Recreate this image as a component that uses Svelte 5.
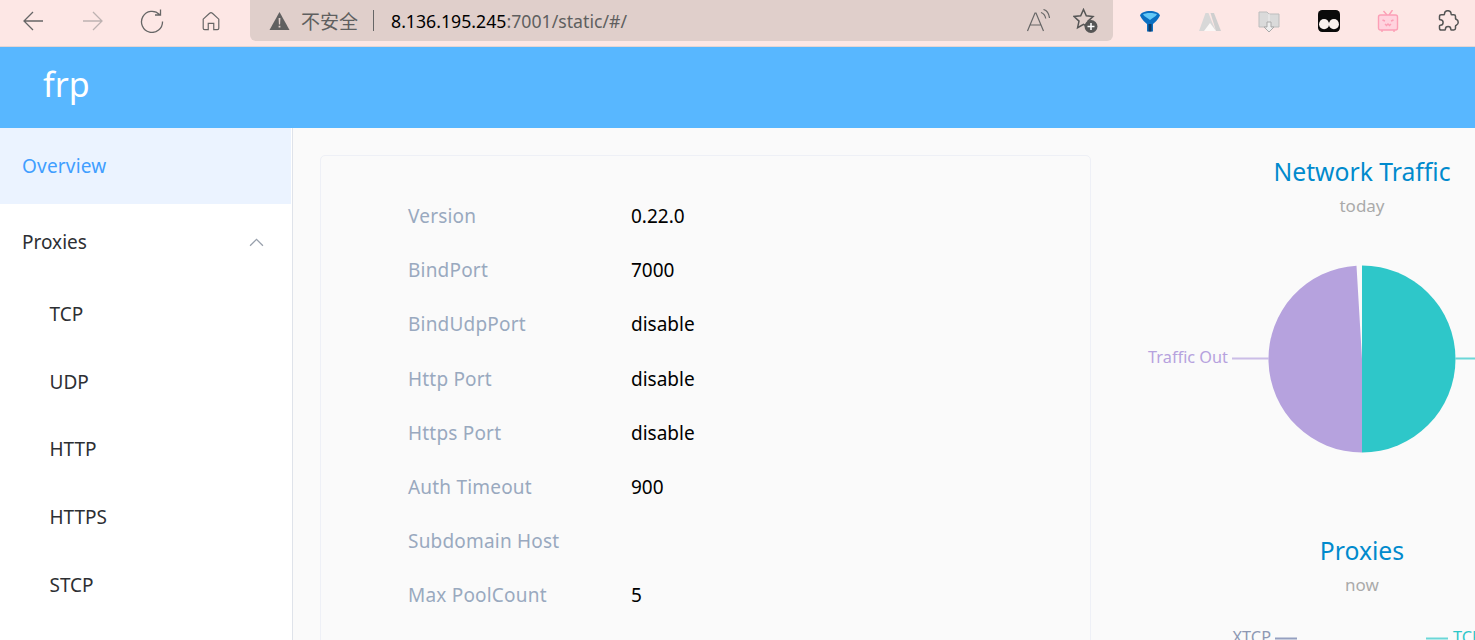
<script>
  const submenu = ['TCP', 'UDP', 'HTTP', 'HTTPS', 'STCP'];
  const info = [
    ['Version', '0.22.0'],
    ['BindPort', '7000'],
    ['BindUdpPort', 'disable'],
    ['Http Port', 'disable'],
    ['Https Port', 'disable'],
    ['Auth Timeout', '900'],
    ['Subdomain Host', ''],
    ['Max PoolCount', '5']
  ];
</script>

<div class="page">
  <div class="toolbar">
    <div class="nav">
      <svg class="navicon" viewBox="0 0 24 24"><path d="M22 12H3M12 3l-9 9 9 9" /></svg>
      <svg class="navicon off" viewBox="0 0 24 24"><path d="M2 12h19M12 3l9 9-9 9" /></svg>
      <svg class="navicon" viewBox="0 0 24 24"><path d="M19.500 5.500A10.500 10.500 0 1 0 22.500 12.500M20.500 .5v5.500h-5.500" /></svg>
      <svg class="navicon home" viewBox="0 0 24 24"><path d="M3.500 10 10.500 3.500a2.200 2.200 0 0 1 3 0L20.500 10V20a1.500 1.500 0 0 1-1.500 1.500H15V14.500H9v7H5A1.500 1.500 0 0 1 3.500 20z" /></svg>
    </div>
    <div class="address">
      <svg class="warn" viewBox="0 0 20 18"><path d="M10 0 20 18H0z" fill="#606060" /><path d="M9.100 6h1.800l-.3 6.500h-1.200zM9.100 13.800h1.800v1.800H9.100z" fill="#e0cfcb" /></svg>
      <span class="insecure">不安全</span>
      <span class="sep"></span>
      <span class="url"><b>8.136.195.245</b>:7001/static/#/</span>
      <span class="spacer"></span>
      <svg class="read" viewBox="0 0 24 24"><path d="M1.500 22 9 4h1l7.500 18M4.500 16h10M15 3.500c2.800 1 4.200 3.200 4.700 6M17.500 .5c3.500 1 5.500 4.500 6 8.500" /></svg>
      <svg class="fav" viewBox="0 0 26 26"><path d="M10.500 1.500l2.800 6.300 6.700.7-5 4.600 1.400 6.600-5.900-3.400-5.900 3.400 1.400-6.600-5-4.600 6.700-.7z" /><circle cx="18" cy="18.500" r="6.500" fill="#555" stroke="none" /><path d="M18 15v7M14.500 18.500h7" stroke="#fff" /></svg>
    </div>
    <div class="extensions">
      <svg class="ext" viewBox="0 0 22 22"><path d="M1 5.500C2 2.500 6 1 11 1s9 1.500 10 4.500c-2 4.500-5.500 7-7 8.500v7.500h-6V14C6.500 12.500 3 10 1 5.500z" fill="#0a6fc2" /><path d="M4 4.500C6 2.500 16 2.500 18 4.500 16 7 13 8 11 10 9 8 6 7 4 4.500z" fill="#63c8f7" /><path d="M9.500 14h3v7.500h-3z" fill="#123a63" /></svg>
      <svg class="ext" viewBox="0 0 22 22"><path d="M0 21 6.500 3h3L13 12l4 9z" fill="#d8d8d8" /><path d="M11.500 3h3.500L22 21h-5z" fill="#cfcfcf" /><path d="M5 21l6-8 6 8z" fill="#fbf8f7" /></svg>
      <svg class="ext" viewBox="0 0 22 22"><path d="M1 2h8l2 2h10v13H1z" fill="#dadada" stroke="#bdbdbd" /><path d="M11 4v13" stroke="#eee" /><path d="M9 12h4v5h3l-5 5-5-5h3z" fill="#eee" stroke="#aaa" /></svg>
      <svg class="ext" viewBox="0 0 21 21"><rect width="21" height="21" rx="4" fill="#0a0a0a" /><circle cx="5.800" cy="13.500" r="4.800" fill="#f8f0ee" /><circle cx="15.200" cy="13.500" r="4.800" fill="#f8f0ee" /></svg>
      <svg class="ext tv" viewBox="0 0 22 22"><path d="M6.500 1l3.500 4M15.500 0l-3.500 5" /><rect x="1.500" y="5" width="19" height="15" rx="2" fill="#ffd3de" /><path d="M5.500 10l2.500 1M16.500 10l-2.500 1M8 14l1.500 1.500 1.500-1.500 1.500 1.500 1.500-1.500M5 20v2M17 20v2" /></svg>
      <svg class="ext puzzle" viewBox="0 0 22 22"><path d="M7.500 4a3.300 3.300 0 0 1 6.600 0c0 .5.400.8.800.8h1.900c1 0 1.700.7 1.700 1.700v1.900c0 .5.300.8.800.8a3.300 3.300 0 0 1 0 6c-.5 0-.8.400-.8.800v2.300c0 1-.7 1.700-1.700 1.700h-2.200c-.5 0-.8-.4-.8-.8a2.700 2.700 0 0 0-5.400 0c0 .4-.3.800-.8.800H4.300c-1 0-1.800-.8-1.800-1.800v-2.100c0-.5.400-.8.800-.8a2.800 2.800 0 0 0 0-5.600c-.4 0-.8-.3-.8-.8V6.500c0-1 .8-1.700 1.800-1.700h2.400c.5 0 .8-.3.800-.8z" /></svg>
    </div>
  </div>

  <header class="header"><span class="brand">frp</span></header>

  <div class="body">
    <aside class="sidebar">
      <div class="item active">Overview</div>
      <div class="item">
        <span>Proxies</span>
        <svg class="chevron" viewBox="0 0 14 8"><path d="M1 7l6-6 6 6" /></svg>
      </div>
      {#each submenu as name}
        <div class="subitem">{name}</div>
      {/each}
    </aside>

    <main class="main">
      <section class="card">
        {#each info as [label, value]}
          <div class="row">
            <span class="label">{label}</span>
            <span class="value">{value}</span>
          </div>
        {/each}
      </section>

      <section class="charts">
        <div class="chart">
          <div class="title">Network Traffic</div>
          <div class="subtitle">today</div>
          <svg class="pie" viewBox="0 0 542 260" width="542" height="260">
            <path d="M271 40.500a93.500 93.500 0 0 1 0 187z" fill="#2ec7c9" />
            <path d="M271 227.500a93.500 93.500 0 0 1-5.500-186.840L271 134z" fill="#b6a2de" />
            <path d="M177.500 133.500H141" stroke="#b6a2de" stroke-opacity="0.7" stroke-width="2" fill="none" />
            <path d="M364.500 133.500H401" stroke="#2ec7c9" stroke-opacity="0.7" stroke-width="2" fill="none" />
            <text x="137" y="138" text-anchor="end" fill="#b6a2de">Traffic Out</text>
          </svg>
        </div>
        <div class="chart second">
          <div class="title">Proxies</div>
          <div class="subtitle">now</div>
          <svg class="legend" viewBox="0 0 542 30" width="542" height="30">
            <path d="M184 41.500h22" stroke="#95a0c0" stroke-width="2" fill="none" />
            <text x="180" y="46" text-anchor="end" fill="#8d98b3">XTCP</text>
            <path d="M335 41.500h22" stroke="#2ec7c9" stroke-opacity="0.7" stroke-width="2" fill="none" />
            <text x="362" y="46" fill="#2ec7c9">TCP</text>
          </svg>
        </div>
      </section>
    </main>
  </div>
</div>

<style>
  :global(body) {
    margin: 0;
    overflow: hidden;
  }

  .page {
    width: 1475px;
    height: 640px;
    overflow: hidden;
    display: flex;
    flex-direction: column;
    font-family: 'Noto Sans', 'Noto Sans CJK SC', sans-serif;
    background: #fafafa;
  }

  .toolbar {
    flex: none;
    height: 46px;
    display: flex;
    align-items: flex-start;
    background: #fde7e5;
    border-bottom: 1px solid #e5d5d3;
  }

  .nav {
    width: 250px;
    height: 41px;
    flex: none;
    display: flex;
    align-items: center;
    gap: 35.500px;
    padding-left: 21px;
    box-sizing: border-box;
  }

  .navicon {
    width: 24px;
    height: 24px;
    fill: none;
    stroke: #666;
    stroke-width: 1.300;
  }

  .navicon.off {
    stroke: #bdb2b1;
  }

  .navicon.home {
    width: 22px;
    height: 22px;
  }

  .address {
    width: 863px;
    height: 41px;
    flex: none;
    display: flex;
    align-items: center;
    padding: 0 14px 0 19px;
    box-sizing: border-box;
    background: #e0cfcb;
    border-radius: 0 0 6px 6px;
  }

  .warn {
    width: 21px;
    height: 18px;
    flex: none;
  }

  .insecure {
    margin-left: 11px;
    font-size: 19px;
    color: #5f5f5f;
  }

  .sep {
    width: 1px;
    height: 21px;
    margin: 0 17px 0 15px;
    background: #666;
  }

  .url {
    font-size: 17.700px;
    color: #5f5f5f;
  }

  .url b {
    font-weight: 400;
    color: #000;
  }

  .spacer {
    flex: 1;
  }

  .read {
    width: 24px;
    height: 24px;
    fill: none;
    stroke: #666;
    stroke-width: 1.200;
  }

  .fav {
    width: 26px;
    height: 26px;
    margin-left: 23px;
    fill: none;
    stroke: #555;
    stroke-width: 1.500;
  }

  .extensions {
    flex: 1;
    height: 41px;
    display: flex;
    align-items: center;
    padding-left: 26px;
    gap: 37.600px;
  }

  .ext {
    width: 22px;
    height: 22px;
    flex: none;
  }

  .tv {
    fill: none;
    stroke: #fc9fb6;
    stroke-width: 1.400;
  }

  .puzzle {
    fill: none;
    stroke: #555;
    stroke-width: 1.500;
  }

  .header {
    flex: none;
    height: 81px;
    display: flex;
    align-items: center;
    padding: 0 0 7px 43px;
    box-sizing: border-box;
    background: #58b7ff;
  }

  .brand {
    color: #fff;
    font-size: 34px;
  }

  .body {
    flex: 1;
    display: flex;
    min-height: 0;
  }

  .sidebar {
    flex: none;
    width: 293px;
    box-sizing: border-box;
    background: #fff;
    border-right: 1px solid #dfe3ea;
  }

  .item {
    height: 76px;
    display: flex;
    align-items: center;
    justify-content: space-between;
    padding: 0 28px 0 22px;
    font-size: 19px;
    color: #2d2f33;
  }

  .item.active {
    color: #409eff;
    margin-right: 1px;
    background: #ebf3ff;
    letter-spacing: 0.2px;
  }

  .chevron {
    width: 15px;
    height: 9px;
    fill: none;
    stroke: #98a0ac;
    stroke-width: 1.200;
  }

  .subitem {
    height: 67.800px;
    display: flex;
    align-items: center;
    padding-left: 49.500px;
    font-size: 19px;
    color: #2d2f33;
  }

  .main {
    flex: 1;
    display: flex;
    min-width: 0;
    padding: 27px 0 0 27px;
  }

  .card {
    flex: none;
    width: 771px;
    height: 600px;
    box-sizing: border-box;
    padding: 33px 0 0 87px;
    border: 1px solid #eef0f6;
    border-radius: 5px;
  }

  .row {
    height: 54.200px;
    display: flex;
    align-items: center;
    font-size: 19px;
  }

  .label {
    width: 223px;
    color: #99a9bf;
    letter-spacing: 0.2px;
  }

  .value {
    color: #000;
  }

  .charts {
    flex: none;
    width: 542px;
  }

  .chart {
    display: flex;
    flex-direction: column;
    align-items: center;
  }

  .chart.second {
    margin-top: 49.500px;
  }

  .title {
    margin-top: -0.5px;
    font-size: 24.700px;
    line-height: 34px;
    color: #008acd;
  }

  .subtitle {
    margin-top: 5.500px;
    font-size: 17px;
    line-height: 24px;
    color: #aaa;
  }

  .pie {
    display: block;
    margin-top: 6.500px;
  }

  .pie text,
  .legend text {
    font-size: 16.300px;
  }

  .legend {
    display: block;
    overflow: visible;
  }
</style>
